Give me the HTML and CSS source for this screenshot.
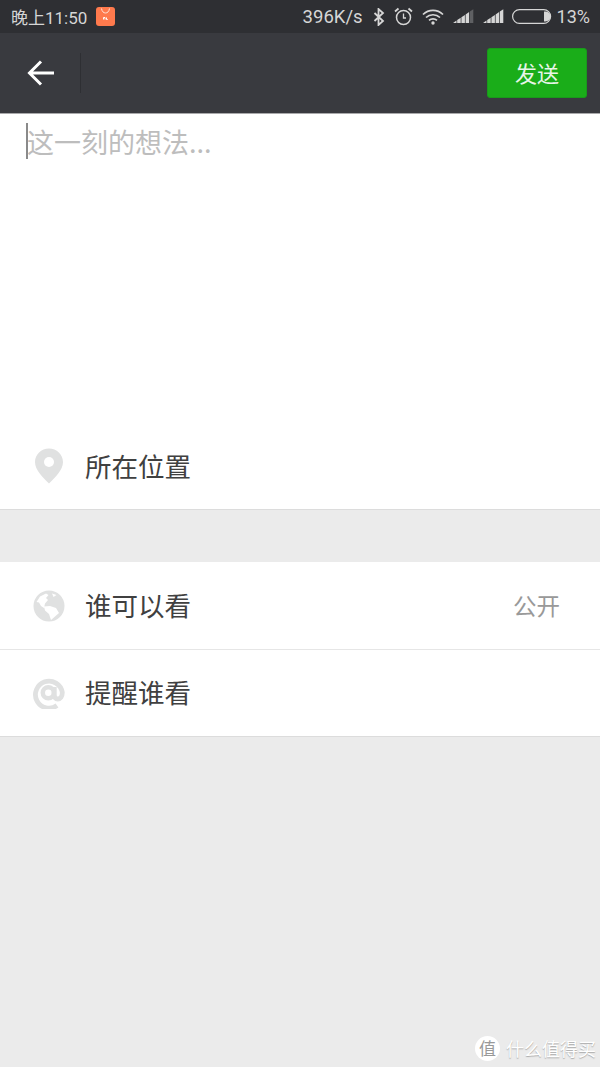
FILE: index.html
```html
<!DOCTYPE html>
<html lang="zh-CN">
<head>
    <meta charset="UTF-8">
    <meta name="viewport" content="width=device-width, initial-scale=1.0">
    <title>发表文字</title>
    <link rel="stylesheet" href="styles.css">
</head>
<body>
    <div class="status-bar">
        <div class="status-left">
            <span class="status-time">晚上11:50</span>
            <svg class="shop-icon" width="19" height="19" viewBox="0 0 19 19">
                <rect width="19" height="19" rx="3" fill="#ff7a4d"/>
                <path d="M5.500 1.500c.5 3 2 4.500 4 4.500s3.500-1.500 4-4.500" fill="none" stroke="#ffe3d6" stroke-width="1"/>
                <path d="M7.500 12.500v-2h1.500v2M10.500 10.500v2h1.200" fill="none" stroke="#fff" stroke-width="1"/>
            </svg>
        </div>
        <div class="status-right">
            <span class="status-speed">396K/s</span>
            <svg class="status-bt" width="12" height="18" viewBox="0 0 12 18">
                <path d="M1.500 5l8.500 8-4.500 4V1l4.500 4-8.500 8" fill="none" stroke="#d6d6d6" stroke-width="1.800"/>
            </svg>
            <svg class="status-alarm" width="19" height="19" viewBox="0 0 19 19">
                <circle cx="9.500" cy="10.500" r="7" fill="none" stroke="#d6d6d6" stroke-width="1.500"/>
                <path d="M9.500 6.500V11H12" fill="none" stroke="#d6d6d6" stroke-width="1.300"/>
                <path d="M1 4.500L4.500 1.500M18 4.500L14.500 1.500" fill="none" stroke="#d6d6d6" stroke-width="1.800"/>
            </svg>
            <svg class="status-wifi" width="22" height="17" viewBox="0 0 22 17">
                <path d="M1 6.500c5.500-5.500 14.500-5.500 20 0M4 9.500c3.800-3.700 10.200-3.700 14 0M7 12.300c2.200-1.900 5.800-1.900 8 0" fill="none" stroke="#d6d6d6" stroke-width="1.700"/>
                <circle cx="11" cy="15" r="1.700" fill="#d6d6d6"/>
            </svg>
            <svg class="status-signal" width="21" height="15" viewBox="0 0 21 15">
                <path d="M0 14l3.500-2.400V14zM4.200 14v-2.900l3.500-2.400V14zM8.400 14V8.300l3.500-2.400V14zM12.600 14V5.400l3.500-2.400v11z" fill="#d6d6d6"/>
                <path d="M16.800 14V2.600l3.500-2.400v13.800z" fill="#5f6063"/>
            </svg>
            <svg class="status-signal" width="21" height="15" viewBox="0 0 21 15">
                <path d="M0 14l3.500-2.400V14zM4.200 14v-2.900l3.500-2.400V14zM8.400 14V8.300l3.500-2.400V14zM12.600 14V5.400l3.500-2.400v11zM16.800 14V2.600l3.500-2.400v13.800z" fill="#d6d6d6"/>
            </svg>
            <svg class="status-battery" width="40" height="15" viewBox="0 0 40 15">
                <rect x=".6" y=".6" width="38" height="13.800" rx="6.900" fill="none" stroke="#d6d6d6" stroke-width="1.200"/>
                <path d="M32 2.500h1.500a5 5 0 0 1 0 10H32z" fill="#d6d6d6"/>
            </svg>
            <span class="status-percent">13%</span>
        </div>
    </div>

    <div class="top-bar">
        <div class="top-left">
            <button class="back-btn">
                <svg width="28" height="28" viewBox="0 0 28 28">
                    <path d="M28 14H4M15 2.500L3.500 14 15 25.500" fill="none" stroke="#fff" stroke-width="3"/>
                </svg>
            </button>
            <div class="top-divider"></div>
        </div>
        <button class="send-btn">发送</button>
    </div>

    <div class="compose">
        <div class="compose-input">
            <span class="caret"></span>
            <span class="placeholder">这一刻的想法...</span>
        </div>
        <div class="row row-location">
            <svg class="row-icon" width="30" height="36" viewBox="0 0 30 36">
                <path d="M15 .5C7.300.5 1 6.500 1 14c0 8 8 15.500 14 21.500C21 29.500 29 22 29 14 29 6.500 22.700.5 15 .5z" fill="#e0e1e1"/>
                <circle cx="15" cy="14" r="5" fill="#fff"/>
            </svg>
            <span class="row-label">所在位置</span>
        </div>
    </div>

    <div class="group">
        <div class="row row-split">
            <svg class="row-icon" width="32" height="32" viewBox="0 0 32 32">
                <circle cx="16" cy="16" r="15.500" fill="#e0e1e1"/>
                <path d="M3.500 12L7 6.500l6-3 2.500 1.500-2.500 3 2 2-3 3.500-1 4.500-3-2-2-3.500zM11 16.500l6-.5 6 2 3 5-8 7-2-6-4-3.500zM19 3.500l4.500 1.500-3 2z" fill="#fff"/>
            </svg>
            <span class="row-label">谁可以看</span>
            <span class="row-value">公开</span>
        </div>
        <div class="row row-last">
            <svg class="row-icon" width="32" height="32" viewBox="0 0 32 32">
                <path d="M24 28.500A13.500 13.500 0 1 1 29.300 15.500c0 4-2 6.500-4.500 6.500s-3.500-2-3.500-4v-8" fill="none" stroke="#e0e1e1" stroke-width="4.800"/>
                <circle cx="15.300" cy="15.700" r="5.500" fill="none" stroke="#e0e1e1" stroke-width="4.500"/>
            </svg>
            <span class="row-label">提醒谁看</span>
        </div>
    </div>

    <!-- watermark -->
    <div class="watermark">
        <span class="watermark-badge">值</span>
        <span class="watermark-text">什么值得买</span>
    </div>
</body>
</html>
```

FILE: styles.css
```css
* {
    box-sizing: border-box;
}

html, body {
    height: 100%;
}

body {
    position: relative;
    margin: 0;
    background: #ebebeb;
    font-family: "Noto Sans CJK SC", sans-serif;
    overflow: hidden;
}

.status-bar {
    display: flex;
    justify-content: space-between;
    align-items: center;
    height: 33px;
    padding: 0 10px 0 11px;
    background: #2e2f33;
    color: #d6d6d6;
    font-family: Roboto, "Noto Sans CJK SC", sans-serif;
    font-size: 18px;
}

.status-left, .status-right {
    display: flex;
    align-items: center;
}

.status-time {
    font-size: 17px;
}

.status-speed {
    font-size: 18.5px;
}

.shop-icon {
    margin-left: 9px;
}

.status-bt {
    margin-left: 10px;
}

.status-alarm {
    margin-left: 9px;
}

.status-wifi {
    margin-left: 9px;
}

.status-signal {
    margin-left: 9px;
}

.status-battery {
    margin-left: 8px;
}

.status-percent {
    margin-left: 5px;
}

.top-bar {
    display: flex;
    justify-content: space-between;
    align-items: center;
    height: 81px;
    padding: 0 13px 0 26px;
    background: #393a3f;
    border-bottom: 1px solid #a9a9ab;
}

.top-left {
    display: flex;
    align-items: center;
}

.back-btn {
    display: flex;
    padding: 0;
    border: none;
    background: none;
}

.top-divider {
    width: 1px;
    height: 40px;
    margin-left: 26px;
    background: #2e2f33;
}

.send-btn {
    width: 100px;
    height: 50px;
    padding: 0 0 2px;
    border: 1px solid #199a1b;
    border-radius: 3px;
    background: #1aad19;
    color: #e8f5e8;
    font-family: inherit;
    font-size: 22px;
}

.compose {
    display: flex;
    flex-direction: column;
    justify-content: space-between;
    height: 396px;
    background: #fff;
    border-bottom: 1px solid #dcdcdc;
}

.compose-input {
    display: flex;
    padding: 9px 0 0 26px;
}

.caret {
    width: 2px;
    height: 36px;
    background: #8a8a8a;
}

.placeholder {
    height: 36px;
    margin: 1px 0 0 -1px;
    color: #bdbdbd;
    font-size: 27px;
    line-height: 36px;
}

.group {
    margin-top: 52px;
    background: #fff;
    border-bottom: 1px solid #dcdcdc;
}

.row {
    display: flex;
    align-items: center;
    height: 87px;
    padding: 0 40px 0 33px;
}

.row-split {
    height: 88px;
    border-bottom: 1px solid #e6e6e6;
}

.row-last {
    height: 86px;
    padding-bottom: 1px;
}

.row-icon {
    width: 32px;
    flex-shrink: 0;
}

.row-label {
    margin-left: 20px;
    color: #404040;
    font-size: 26.5px;
}

.group .row-label {
    margin-bottom: 2px;
}

.row-value {
    margin-left: auto;
    margin-bottom: 2px;
    color: #999;
    font-size: 23.5px;
}

.watermark {
    position: absolute;
    right: 4px;
    bottom: 6px;
    display: flex;
    align-items: center;
    gap: 6px;
}

.watermark-badge {
    width: 25px;
    height: 25px;
    border-radius: 50%;
    background: #fff;
    color: #999;
    font-size: 17px;
    line-height: 24px;
    text-align: center;
}

.watermark-text {
    color: #fff;
    font-size: 18px;
    text-shadow: 0 1px 1px #aaa;
}
```
